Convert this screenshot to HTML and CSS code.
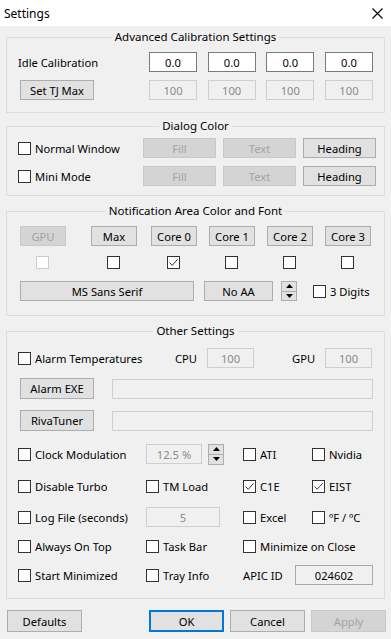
FILE: index.html
```html
<!DOCTYPE html>
<html>
<head>
<meta charset="utf-8">
<title>Settings</title>
<link rel="stylesheet" href="styles.css">
</head>
<body>
<div class="titlebar">
  <span class="title">Settings</span>
  <svg class="close" viewBox="0 0 11 11"><path d="M0.5 0.5L10.5 10.5M10.5 0.5L0.5 10.5" stroke="#000" stroke-width="1.1" fill="none"/></svg>
</div>
<div class="content">
  <fieldset class="grp g1">
    <legend>Advanced Calibration Settings</legend>
    <div class="row r1">
      <span class="lbl">Idle Calibration</span>
      <div class="quad">
        <span class="fld">0.0</span><span class="fld">0.0</span><span class="fld">0.0</span><span class="fld">0.0</span>
      </div>
    </div>
    <div class="row r2">
      <span class="btn tj">Set TJ Max</span>
      <div class="quad">
        <span class="fld dis">100</span><span class="fld dis">100</span><span class="fld dis">100</span><span class="fld dis">100</span>
      </div>
    </div>
  </fieldset>

  <fieldset class="grp g2">
    <legend>Dialog Color</legend>
    <div class="crow first">
      <label class="chk"><span class="cb"></span>Normal Window</label>
      <span class="btn dis">Fill</span><span class="btn dis">Text</span><span class="btn">Heading</span>
    </div>
    <div class="crow">
      <label class="chk"><span class="cb"></span>Mini Mode</label>
      <span class="btn dis">Fill</span><span class="btn dis">Text</span><span class="btn">Heading</span>
    </div>
  </fieldset>

  <fieldset class="grp g3">
    <legend>Notification Area Color and Font</legend>
    <div class="cores">
      <span class="btn dis">GPU</span><span class="btn">Max</span><span class="btn">Core 0</span><span class="btn">Core 1</span><span class="btn">Core 2</span><span class="btn">Core 3</span>
    </div>
    <div class="cores boxes">
      <span class="cb off"></span><span class="cb"></span>
      <span class="cb"><svg viewBox="0 0 11 11"><path d="M1.5 5.5L4.2 8.3L9.6 2.3" stroke="#333" stroke-width="1" fill="none"/></svg></span>
      <span class="cb"></span><span class="cb"></span><span class="cb"></span>
    </div>
    <div class="fontrow">
      <span class="btn font">MS Sans Serif</span>
      <span class="btn aa">No AA</span>
      <span class="spin"><span class="sb"><svg viewBox="0 0 7 4"><path d="M0 4L3.5 0L7 4Z" fill="#000"/></svg></span><span class="sb"><svg viewBox="0 0 7 4"><path d="M0 0L3.5 4L7 0Z" fill="#000"/></svg></span></span>
      <label class="chk digits"><span class="cb"></span>3 Digits</label>
    </div>
  </fieldset>

  <fieldset class="grp g4">
    <legend>Other Settings</legend>
    <div class="alarm">
      <label class="chk"><span class="cb"></span>Alarm Temperatures</label>
      <span class="lbl">CPU</span>
      <span class="fld dis tall">100</span>
      <span class="lbl gpu">GPU</span>
      <span class="fld dis tall">100</span>
    </div>
    <div class="exe">
      <span class="btn tall wide">Alarm EXE</span>
      <span class="fld dis tall path"></span>
    </div>
    <div class="exe riva">
      <span class="btn tall wide">RivaTuner</span>
      <span class="fld dis tall path"></span>
    </div>
    <div class="opts o1">
      <label class="chk"><span class="cb"></span>Clock Modulation</label>
      <div class="pair">
        <span class="fld dis tall clk">12.5 %</span>
        <span class="spin"><span class="sb"><svg viewBox="0 0 7 4"><path d="M0 4L3.5 0L7 4Z" fill="#000"/></svg></span><span class="sb"><svg viewBox="0 0 7 4"><path d="M0 0L3.5 4L7 0Z" fill="#000"/></svg></span></span>
      </div>
      <label class="chk"><span class="cb"></span>ATI</label>
      <label class="chk"><span class="cb"></span>Nvidia</label>
    </div>
    <div class="opts o2">
      <label class="chk"><span class="cb"></span>Disable Turbo</label>
      <label class="chk"><span class="cb"></span>TM Load</label>
      <label class="chk"><span class="cb"><svg viewBox="0 0 11 11"><path d="M1.5 5.5L4.2 8.3L9.6 2.3" stroke="#333" stroke-width="1" fill="none"/></svg></span>C1E</label>
      <label class="chk"><span class="cb"><svg viewBox="0 0 11 11"><path d="M1.5 5.5L4.2 8.3L9.6 2.3" stroke="#333" stroke-width="1" fill="none"/></svg></span>EIST</label>
    </div>
    <div class="opts o3">
      <label class="chk"><span class="cb"></span>Log File (seconds)</label>
      <span class="fld dis tall log">5</span>
      <label class="chk"><span class="cb"></span>Excel</label>
      <label class="chk"><span class="cb"></span>ºF / ºC</label>
    </div>
    <div class="opts o4">
      <label class="chk"><span class="cb"></span>Always On Top</label>
      <label class="chk"><span class="cb"></span>Task Bar</label>
      <label class="chk span2"><span class="cb"></span>Minimize on Close</label>
    </div>
    <div class="opts o5">
      <label class="chk"><span class="cb"></span>Start Minimized</label>
      <label class="chk"><span class="cb"></span>Tray Info</label>
      <div class="apic span2">
        <span class="lbl">APIC ID</span>
        <span class="fld ro tall">024602</span>
      </div>
    </div>
  </fieldset>
</div>
<div class="footer">
  <span class="btn tall fb">Defaults</span>
  <div class="right">
    <span class="btn tall fb ok">OK</span>
    <span class="btn tall fb">Cancel</span>
    <span class="btn tall fb dis">Apply</span>
  </div>
</div>
</body>
</html>
```
FILE: styles.css
```css
* { box-sizing: border-box; }
html, body { margin: 0; padding: 0; }
body {
  width: 391px;
  height: 639px;
  overflow: hidden;
  background: #f0f0f0;
  font-family: "Noto Sans", "Open Sans", sans-serif;
  font-size: 11.2px;
  color: #000;
}
.titlebar {
  height: 26px;
  background: #fff;
  display: flex;
  align-items: center;
  justify-content: space-between;
  padding: 0 8px 0 4px;
}
.title { font-size: 12px; }
.close { width: 11px; height: 11px; display: block; }

.content { padding: 3px 6px 0; }
.grp {
  margin: 0;
  border: 1px solid #dcdcdc;
  padding: 0 11px 12px;
  min-width: 0;
}
.g2 { margin-top: 5px; }
.g3, .g4 { margin-top: 7px; }
legend {
  margin: 0 auto;
  padding: 0 3px;
  line-height: 16px;
  font-size: 11.5px;
}

.btn {
  height: 20px;
  background: #e1e1e1;
  border: 1px solid #adadad;
  display: flex;
  align-items: center;
  justify-content: center;
  white-space: nowrap;
}
.btn.dis { background: #d4d4d4; border-color: #c9c9c9; color: #a3a3a3; }
.tall { height: 21px; }

.fld {
  height: 20px;
  background: #fff;
  border: 1px solid #7a7a7a;
  display: flex;
  align-items: center;
  justify-content: center;
  white-space: nowrap;
}
.fld.dis { background: #f0f0f0; border-color: #cfcfcf; color: #8a8a8a; }
.fld.ro { background: #f0f0f0; border-color: #a8a8a8; color: #000; }

.cb {
  width: 13px;
  height: 13px;
  border: 1px solid #333;
  background: #fff;
  flex: none;
  display: block;
}
.cb svg { width: 11px; height: 11px; display: block; }
.cb.off { border-color: #cccccc; }
.chk { display: flex; align-items: center; gap: 4px; white-space: nowrap; }

/* group 1 */
.row { display: flex; align-items: center; justify-content: space-between; }
.r1 { margin-top: 7px; }
.r2 { margin-top: 8px; }
.quad {
  width: 224px;
  display: grid;
  grid-template-columns: repeat(4, 48px);
  justify-content: space-between;
}
.tj { width: 74px; margin-left: 2px; }

/* group 2 */
.g2 { padding-bottom: 9px; }
.crow {
  display: grid;
  grid-template-columns: 118px 73px 73px 73px;
  column-gap: 7px;
  align-items: center;
  margin-top: 8px;
}
.crow.first { margin-top: 4px; }

/* group 3 */
.g3 { padding-bottom: 14px; }
.cores {
  display: grid;
  grid-template-columns: 71px 60px 58px 58px 58px 46px;
  padding-left: 2px;
  margin-top: 7px;
  align-items: center;
}
.cores .btn { width: 46px; }
.cores.boxes { margin-top: 10px; }
.cores.boxes .cb { margin-left: 16px; }
.fontrow {
  display: flex;
  align-items: center;
  margin-top: 12px;
  padding-left: 2px;
}
.font { width: 174px; }
.aa { width: 69px; margin-left: 10px; }
.fontrow .spin { margin-left: 8px; }
.digits { margin-left: 16px; }
.spin { display: flex; flex-direction: column; width: 16px; height: 20px; flex: none; }
.sb {
  flex: 1;
  background: #e1e1e1;
  border: 1px solid #adadad;
  display: flex;
  align-items: center;
  justify-content: center;
}
.sb + .sb { border-top: none; }
.sb svg { width: 7px; height: 4px; display: block; }

/* group 4 */
.g4 { padding-bottom: 12px; }
.alarm {
  display: grid;
  grid-template-columns: 157px 32px 47px 71px 47px;
  align-items: center;
  margin-top: 9px;
}
.gpu { padding-left: 38px; }
.exe {
  display: flex;
  align-items: center;
  padding-left: 2px;
  margin-top: 10px;
}
.riva { margin-top: 11px; }
.wide { width: 74px; }
.path { flex: 1; margin-left: 18px; }
.opts {
  display: grid;
  grid-template-columns: 128px 97px 69px 1fr;
  align-items: center;
  height: 22px;
}
.o1 { margin-top: 12px; }
.o2 { margin-top: 10px; }
.o3 { margin-top: 9px; }
.o4 { margin-top: 7px; }
.o5 { margin-top: 7px; }
.pair { display: flex; align-items: center; gap: 6px; }
.clk { width: 56px; }
.pair .spin { height: 21px; }
.log { width: 74px; }
.span2 { grid-column: 3 / 5; }
.apic { display: flex; align-items: center; justify-content: space-between; }
.apic .fld { width: 78px; }

.footer {
  display: flex;
  justify-content: space-between;
  padding: 11px 5px 0 7px;
}
.right { display: flex; gap: 6px; }
.fb { width: 75px; height: 22px; }
.ok { border-color: #0078d7; box-shadow: inset 0 0 0 1px #0078d7; }
```
